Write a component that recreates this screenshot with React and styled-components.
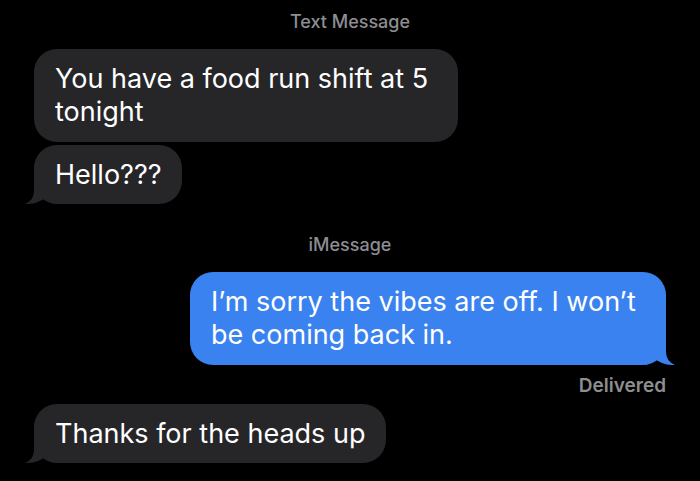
import React from "react";
import styled, { createGlobalStyle } from "styled-components";

const Global = createGlobalStyle`
  html, body {
    margin: 0;
    padding: 0;
    background: #000;
  }
  body {
    font-family: Inter, "Open Sans", "Liberation Sans", sans-serif;
    -webkit-font-smoothing: antialiased;
  }
`;

const Thread = styled.div`
  width: 700px;
  height: 481px;
  overflow: hidden;
  background: #000;
  display: flex;
  flex-direction: column;
  padding: 12px 34px 0;
  box-sizing: border-box;
`;

const Label = styled.div`
  align-self: center;
  color: #8d8d92;
  font-size: 18px;
  line-height: 20px;
  font-weight: 500;
  margin-top: ${p => p.top || 0}px;
`;

const Status = styled.div`
  align-self: flex-end;
  color: #8d8d92;
  font-size: 19px;
  line-height: 20px;
  font-weight: 600;
  margin-top: 11px;
`;

const Bubble = styled.div`
  position: relative;
  box-sizing: border-box;
  align-self: ${p => (p.mine ? "flex-end" : "flex-start")};
  max-width: ${p => p.max}px;
  background: ${p => (p.mine ? "#3a82f0" : "#262628")};
  color: #fff;
  border-radius: 23px;
  padding: 13px 21px 13.5px;
  font-size: 27px;
  line-height: 33px;
  margin-top: ${p => p.top || 0}px;
`;

const Tail = styled.svg`
  position: absolute;
  bottom: 0;
  ${p => (p.mine ? "right: -9px;" : "left: -9px;")}
  width: 30px;
  height: 26px;
  ${p => (p.mine ? "transform: scaleX(-1);" : "")}
`;

const BubbleTail = ({ mine }) => (
  <Tail mine={mine} viewBox="0 0 30 26">
    <path
      d="M9 0 L9 13 Q9 22 0 26 Q12 26.5 20 20 Q25 25 30 26 L30 0 Z"
      fill={mine ? "#3a82f0" : "#262628"}
    />
  </Tail>
);

export default function App() {
  return (
    <>
      <Global />
      <Thread>
        <Label>Text Message</Label>
        <Bubble max={424} top={17}>
          You have a food run shift at 5 tonight
        </Bubble>
        <Bubble top={3}>
          Hello???
          <BubbleTail />
        </Bubble>
        <Label top={31}>iMessage</Label>
        <Bubble mine max={476} top={17}>
          I’m sorry the vibes are off. I won’t be coming back in.
          <BubbleTail mine />
        </Bubble>
        <Status>Delivered</Status>
        <Bubble top={8}>
          Thanks for the heads up
          <BubbleTail />
        </Bubble>
      </Thread>
    </>
  );
}
